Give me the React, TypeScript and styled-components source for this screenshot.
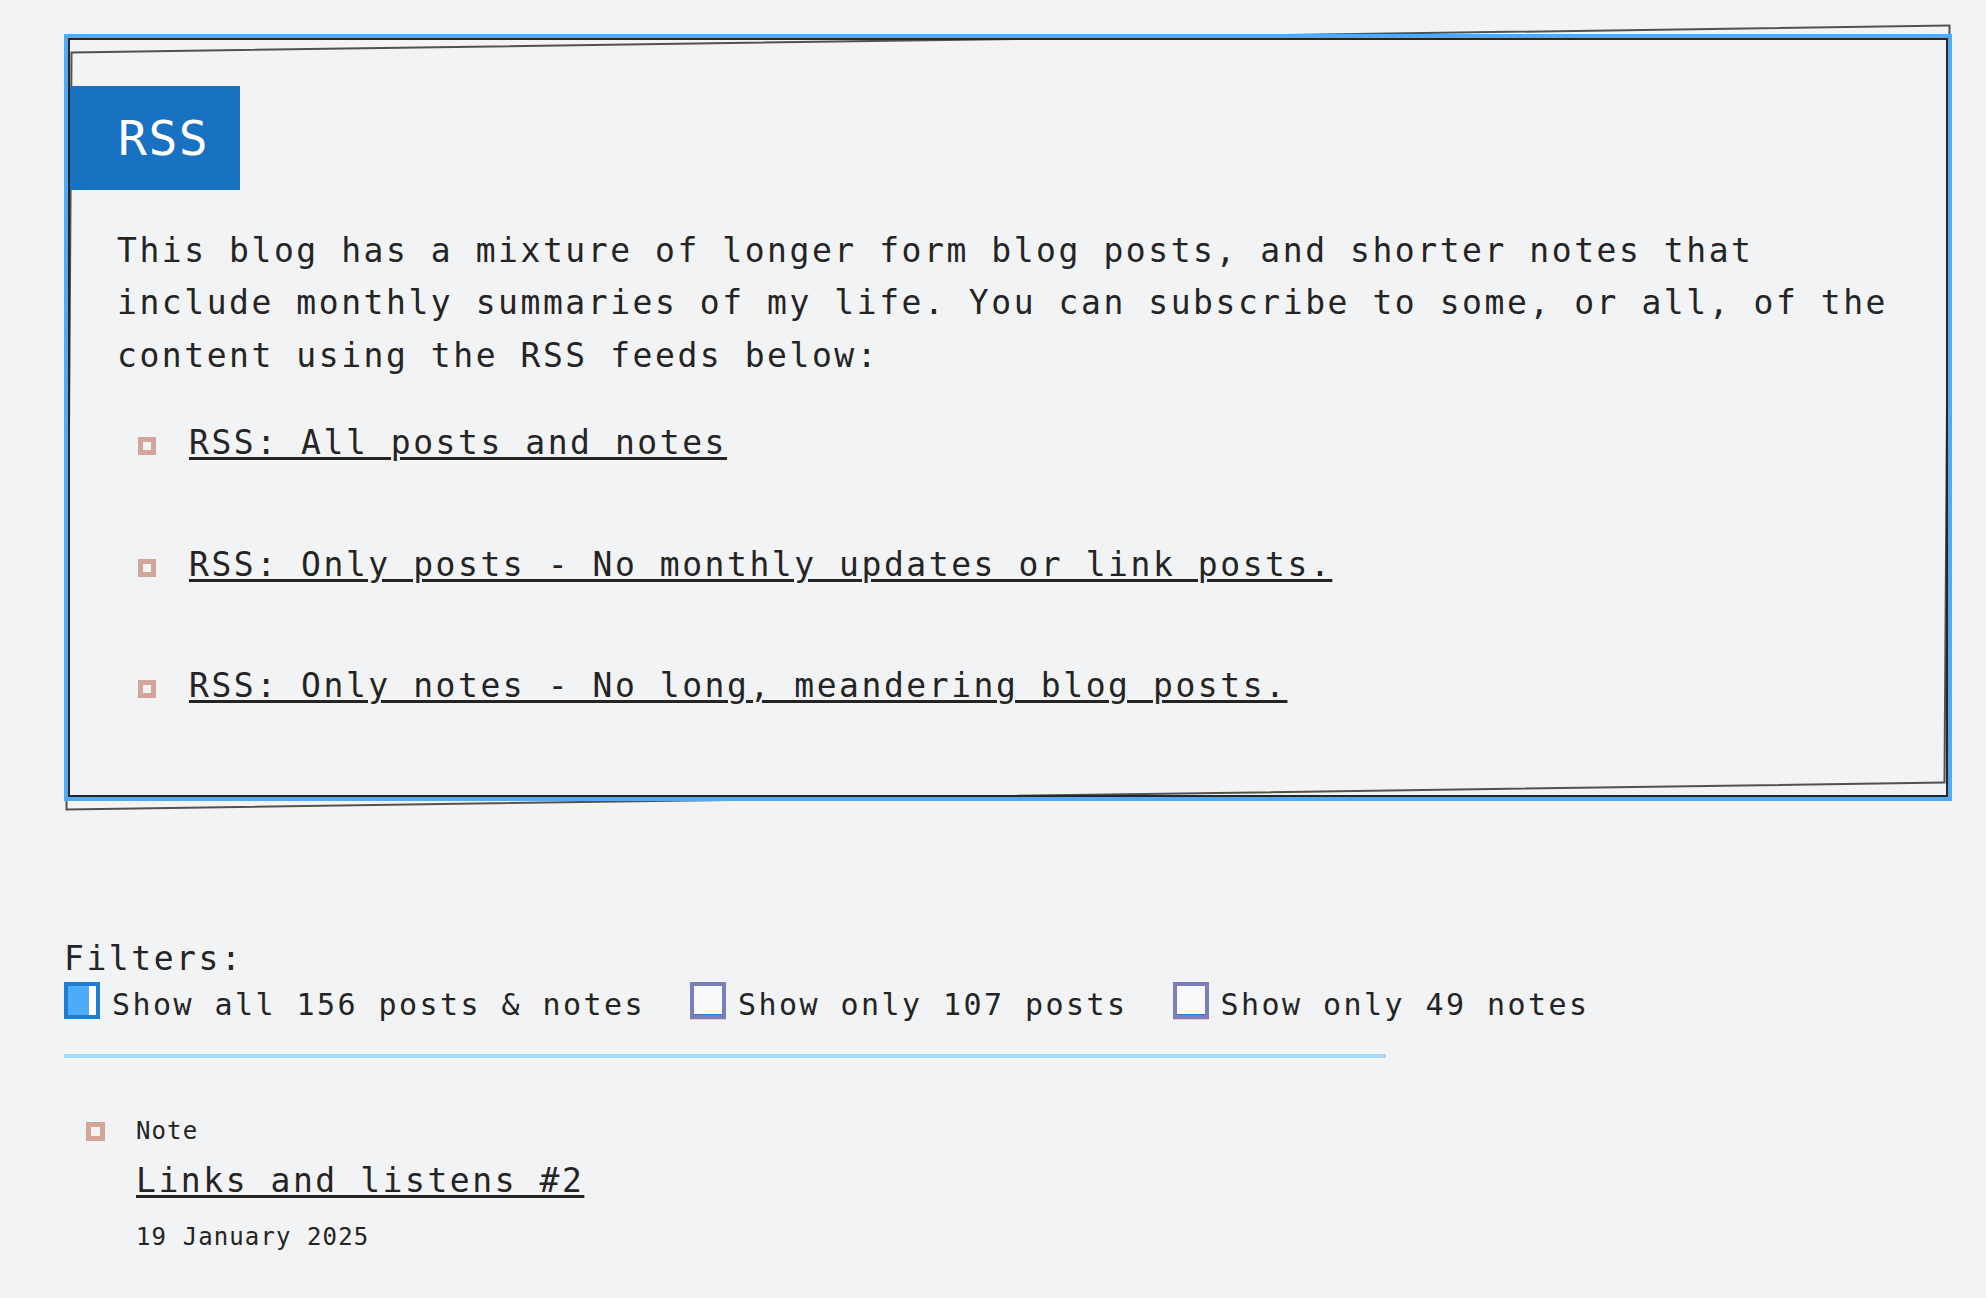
import styled, { createGlobalStyle } from "styled-components";

const GlobalStyle = createGlobalStyle`
  html {
    background: #f1f3f5;
  }
  body {
    margin: 0;
    padding: 0;
    font-family: "DejaVu Sans Mono", "Liberation Mono", monospace;
    color: #242424;
  }
`;

const feeds = [
  "RSS: All posts and notes",
  "RSS: Only posts - No monthly updates or link posts.",
  "RSS: Only notes - No long, meandering blog posts.",
];

const filters = [
  { label: "Show all 156 posts & notes", checked: true },
  { label: "Show only 107 posts", checked: false },
  { label: "Show only 49 notes", checked: false },
];

export default function App() {
  return (
    <>
      <GlobalStyle />
      <Page>
        <RssBox>
          <Tag>RSS</Tag>
          <Intro>
            This blog has a mixture of longer form blog posts, and shorter notes
            that include monthly summaries of my life. You can subscribe to
            some, or all, of the content using the RSS feeds below:
          </Intro>
          <FeedList>
            {feeds.map((f) => (
              <FeedItem key={f}>
                <Square $size={18} $inset={20} />
                <FeedLink href="#">{f}</FeedLink>
              </FeedItem>
            ))}
          </FeedList>
        </RssBox>

        <Filters>
          <FiltersLabel>Filters:</FiltersLabel>
          <FilterRow>
            {filters.map((f) => (
              <FilterOption key={f.label}>
                <Check $checked={f.checked} />
                <FilterText>{f.label}</FilterText>
              </FilterOption>
            ))}
          </FilterRow>
        </Filters>
        <Rule />

        <PostList>
          <PostItem>
            <Square $size={19} $inset={5} />
            <PostBody>
              <Kind>Note</Kind>
              <PostTitle href="#">Links and listens #2</PostTitle>
              <PostDate>19 January 2025</PostDate>
            </PostBody>
          </PostItem>
        </PostList>
      </Page>
    </>
  );
}

const Page = styled.main`
  padding: 34px 34px 60px 64px;
`;

const RssBox = styled.section`
  position: relative;
  border: 4px solid #4dabf7;
  box-shadow: inset 0 0 0 2px #262626;
  padding: 48px 49px 84px 49px;

  /* hand-drawn looking frame, tilted a bit behind the box */
  &::before {
    content: "";
    position: absolute;
    inset: 0;
    border: 2px solid rgba(40, 40, 40, 0.8);
    transform: skew(-0.38deg, -0.82deg);
    z-index: -1;
    pointer-events: none;
  }
`;

const Tag = styled.h2`
  box-sizing: border-box;
  width: 170px;
  height: 104px;
  margin: 0 0 0 -47px;
  padding-left: 48px;
  display: flex;
  align-items: center;
  background: #1971c2;
  color: #fff;
  font-family: "DejaVu Sans Mono", monospace;
  font-size: 48px;
  font-weight: normal;
  letter-spacing: 1.5px;
  line-height: 104px;
`;

const Intro = styled.p`
  margin: 34.6px 0 0 0;
  font-size: 33px;
  letter-spacing: 2.55px;
  line-height: 52.5px;
`;

const FeedList = styled.ul`
  list-style: none;
  margin: 35.2px 0 0 0;
  padding: 0 0 0 21px;
  display: flex;
  flex-direction: column;
  gap: 69px;
`;

const FeedItem = styled.li`
  display: flex;
  align-items: flex-start;
  gap: 33px;
`;

const Square = styled.span<{ $size: number; $inset: number }>`
  flex: none;
  box-sizing: border-box;
  width: ${(p) => p.$size}px;
  height: ${(p) => p.$size}px;
  margin-top: ${(p) => p.$inset}px;
  border: 5px solid #d3a59b;
`;

const FeedLink = styled.a`
  color: #242424;
  font-size: 33px;
  letter-spacing: 2.55px;
  line-height: 52.5px;
  text-decoration: underline;
  text-decoration-thickness: 3px;
  text-underline-offset: 3px;
`;

const Filters = styled.div`
  margin-top: 138.5px;
`;

const FiltersLabel = styled.div`
  font-size: 33px;
  letter-spacing: 2.55px;
  line-height: 39.6px;
`;

const FilterRow = styled.div`
  display: flex;
  align-items: flex-start;
  gap: 45px;
  margin-top: 3px;
`;

const FilterOption = styled.label`
  display: flex;
  align-items: flex-start;
  gap: 12px;
`;

const Check = styled.span<{ $checked: boolean }>`
  flex: none;
  box-sizing: border-box;
  width: 36px;
  height: 37px;
  border: ${(p) => (p.$checked ? "4px solid #1c7ed6" : "4px solid #7a7fba")};
  background: ${(p) =>
    p.$checked
      ? "linear-gradient(to right, #4dabf7 75%, #fff 75%)"
      : "#f8f9fa"};
  box-shadow: ${(p) =>
    p.$checked ? "none" : "inset 0 -1px 0 #1c7ed6, 0 1px 0 #ffc9c9"};
`;

const FilterText = styled.span`
  font-size: 30px;
  letter-spacing: 2.44px;
  line-height: 45px;
`;

const Rule = styled.hr`
  width: 1322px;
  height: 4px;
  margin: 27px 0 0 0;
  border: none;
  background: #a5d8ff;
`;

const PostList = styled.ul`
  list-style: none;
  margin: 59.3px 0 0 0;
  padding: 0 0 0 22px;
`;

const PostItem = styled.li`
  display: flex;
  align-items: flex-start;
  gap: 31px;
`;

const PostBody = styled.div`
  display: flex;
  flex-direction: column;
  align-items: flex-start;
`;

const Kind = styled.span`
  font-size: 24px;
  letter-spacing: 1.1px;
  line-height: 28.8px;
`;

const PostTitle = styled.a`
  margin-top: 9.2px;
  color: #242424;
  font-size: 33px;
  letter-spacing: 2.55px;
  line-height: 52.5px;
  text-decoration: underline;
  text-decoration-thickness: 3px;
  text-underline-offset: 3px;
`;

const PostDate = styled.span`
  margin-top: 15.5px;
  font-size: 24px;
  letter-spacing: 1.1px;
  line-height: 28.8px;
`;
